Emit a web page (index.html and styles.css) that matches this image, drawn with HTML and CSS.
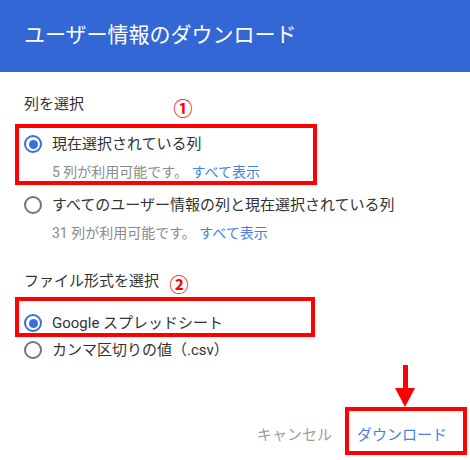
FILE: index.html
```html
<!DOCTYPE html>
<html lang="ja">
<head>
<meta charset="utf-8">
<link rel="stylesheet" href="styles.css">
</head>
<body>
<div class="dialog">
  <header class="dialog-header">
    <h1 class="dialog-title">ユーザー情報のダウンロード</h1>
  </header>
  <main class="dialog-body">
    <div class="group-label first">列を選択</div>
    <div class="option">
      <span class="radio checked"></span>
      <span class="option-label">現在選択されている列</span>
    </div>
    <div class="option-sub">5 列が利用可能です。 <span class="link">すべて表示</span></div>
    <div class="option second">
      <span class="radio"></span>
      <span class="option-label">すべてのユーザー情報の列と現在選択されている列</span>
    </div>
    <div class="option-sub">31 列が利用可能です。 <span class="link">すべて表示</span></div>

    <div class="group-label second-group">ファイル形式を選択</div>
    <div class="option third">
      <span class="radio checked"></span>
      <span class="option-label">Google スプレッドシート</span>
    </div>
    <div class="option fourth">
      <span class="radio"></span>
      <span class="option-label">カンマ区切りの値（.csv）</span>
    </div>
  </main>
  <footer class="dialog-actions">
    <span class="btn btn-cancel">キャンセル</span>
    <span class="btn btn-primary">ダウンロード</span>
  </footer>

  <div class="mark box-1"></div>
  <div class="mark num num-1">①</div>
  <div class="mark box-2"></div>
  <div class="mark num num-2">②</div>
  <div class="mark arrow-line"></div>
  <div class="mark arrow-head"></div>
  <div class="mark box-3"></div>
</div>
</body>
</html>
```

FILE: styles.css
```css
html, body {
  margin: 0;
  padding: 0;
  background: #ffffff;
}

body {
  font-family: Roboto, "Noto Sans CJK JP", sans-serif;
  color: #333333;
}

.dialog {
  position: relative;
  width: 470px;
  height: 460px;
  overflow: hidden;
}

.dialog-header {
  height: 72px;
  background: #3367d6;
  display: flex;
  align-items: center;
  padding: 0 24px;
  box-sizing: border-box;
}

.dialog-title {
  margin: 0;
  font-size: 21px;
  font-weight: 400;
  color: #ffffff;
  line-height: 24px;
  margin-top: -2px;
}

.dialog-body {
  padding: 0 24px;
}

.group-label {
  font-size: 15px;
  line-height: 20px;
  color: #333333;
}

.group-label.first {
  margin-top: 22px;
}

.group-label.second-group {
  margin-top: 28px;
}

.option {
  display: flex;
  align-items: center;
  height: 20px;
  margin-top: 20px;
}

.option.second {
  margin-top: 13px;
}

.option.third {
  margin-top: 22px;
}

.option.fourth {
  margin-top: 7px;
}

.radio {
  width: 18px;
  height: 18px;
  box-sizing: border-box;
  border: 2px solid #757575;
  border-radius: 50%;
  display: flex;
  align-items: center;
  justify-content: center;
  flex: none;
}

.radio.checked {
  border-color: #3b6fd9;
}

.radio.checked::after {
  content: "";
  width: 9px;
  height: 9px;
  border-radius: 50%;
  background: #3b6fd9;
}

.option-label {
  margin-left: 10px;
  font-size: 15px;
  line-height: 20px;
  color: #333333;
}

.option-sub {
  margin-left: 28px;
  margin-top: 8px;
  font-size: 14px;
  line-height: 20px;
  color: #8a8a8a;
}

.option-sub .link {
  color: #4a7fe0;
}

.dialog-actions {
  position: absolute;
  left: 0;
  right: 0;
  top: 425px;
  display: flex;
  justify-content: flex-end;
  align-items: center;
  padding-right: 23px;
  gap: 25px;
}

.btn {
  font-size: 15px;
  line-height: 20px;
}

.btn-cancel {
  color: #9e9e9e;
}

.btn-primary {
  color: #4a7fe0;
}

/* annotation overlays */
.mark {
  position: absolute;
  box-sizing: border-box;
}

.box-1,
.box-2,
.box-3 {
  border: 4px solid #ff0000;
}

.box-1 {
  left: 15px;
  top: 124px;
  width: 302px;
  height: 61px;
}

.box-2 {
  left: 15px;
  top: 297px;
  width: 300px;
  height: 40px;
}

.box-3 {
  left: 345px;
  top: 407px;
  width: 122px;
  height: 48px;
}

.num {
  color: #ff0000;
  font-weight: 700;
  font-size: 19px;
  line-height: 20px;
  width: 24px;
  text-align: center;
  font-family: "Noto Sans CJK JP", sans-serif;
}

.num-1 {
  left: 171px;
  top: 98px;
}

.num-2 {
  left: 167px;
  top: 274px;
}

.arrow-line {
  left: 403px;
  top: 365px;
  width: 5px;
  height: 25px;
  background: #ff0000;
}

.arrow-head {
  left: 395px;
  top: 388px;
  width: 0;
  height: 0;
  border-left: 10.5px solid transparent;
  border-right: 10.5px solid transparent;
  border-top: 19px solid #ff0000;
}
```
